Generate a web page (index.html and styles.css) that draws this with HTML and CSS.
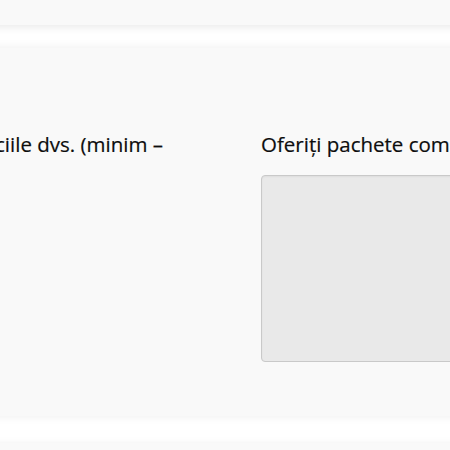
FILE: index.html
```html
<!DOCTYPE html>
<html lang="ro">
<head>
<meta charset="utf-8">
<title>Formular</title>
<link rel="stylesheet" href="styles.css">
</head>
<body>
<div class="band band-top"></div>
<section class="card">
  <div class="row">
    <div class="field field-left">
      <label class="label">Descrieți serviciile dvs. (minim –</label>
    </div>
    <div class="field field-right">
      <label class="label" for="pachete">Oferiți pachete complete de servicii?</label>
      <textarea id="pachete" class="input"></textarea>
    </div>
  </div>
</section>
<div class="band band-bottom"></div>
</body>
</html>
```
FILE: styles.css
```css
html, body {
  margin: 0;
  padding: 0;
  background: #ffffff;
  overflow: hidden;
  font-family: "Open Sans", "Liberation Sans", sans-serif;
  color: #0d0d0d;
}
.band {
  margin: 0 -20px;
  background: #f9f9f9;
  box-shadow: 0 2px 9px rgba(0, 0, 0, 0.09);
}
.band-top {
  height: 25px;
}
.card {
  margin: 23px -20px 0;
  height: 368px;
  background: #f9f9f9;
  box-shadow: 0 0 10px rgba(0, 0, 0, 0.07);
  padding: 80px 20px 0;
  box-sizing: border-box;
  overflow: hidden;
}
.band-bottom {
  margin-top: 27px;
  height: 40px;
}
.row {
  display: grid;
  grid-template-columns: 163px 1fr;
  column-gap: 98px;
}
.field-left {
  display: flex;
  justify-content: flex-end;
}
.field-right {
  display: flex;
  flex-direction: column;
  gap: 15px;
  min-width: 0;
}
.label {
  font-size: 20.5px;
  line-height: 32px;
  white-space: nowrap;
  -webkit-text-stroke: 0.2px #0d0d0d;
}
.input {
  width: 300px;
  height: 187px;
  box-sizing: border-box;
  background: #e9e9e9;
  border: 1px solid #c9c9c9;
  border-radius: 4px;
  resize: none;
  box-shadow: inset 0 1px 2px rgba(0,0,0,0.05);
}
```
